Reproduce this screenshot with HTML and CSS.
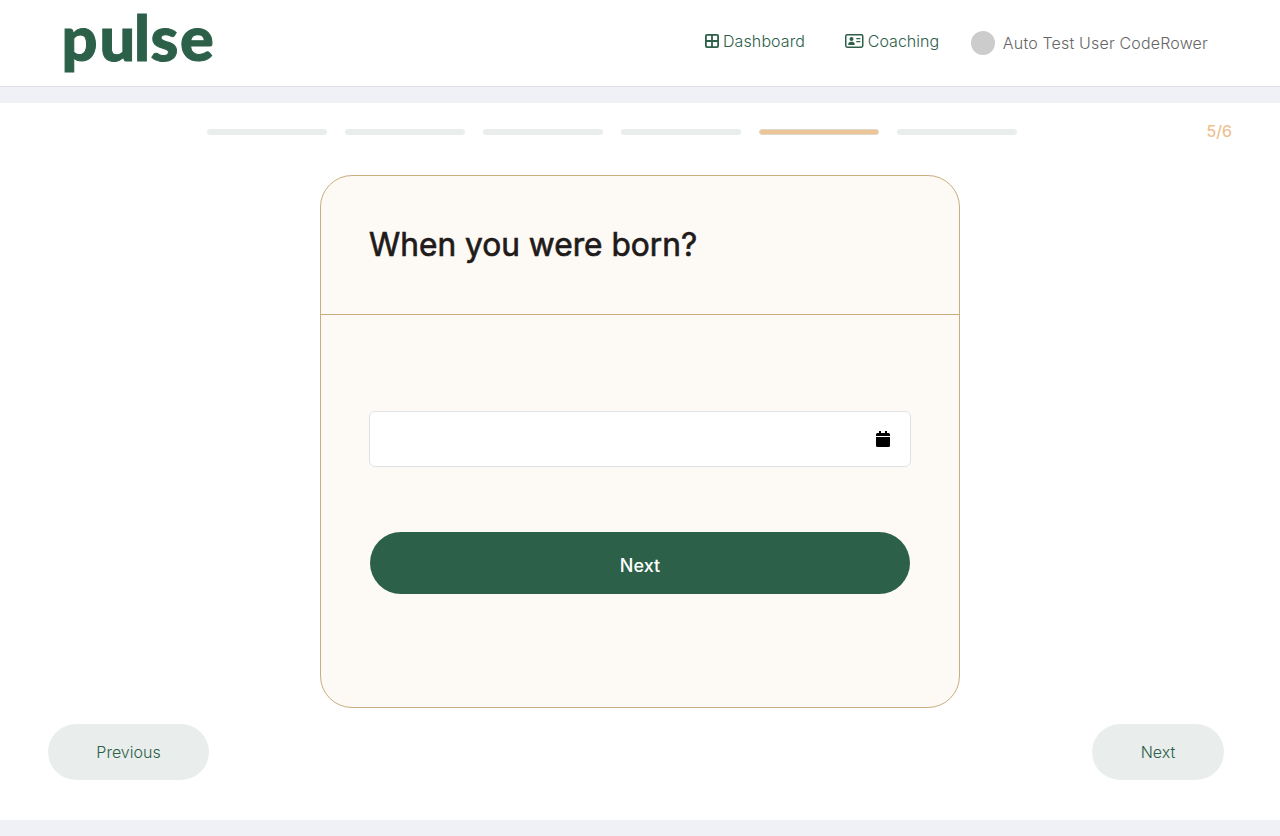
FILE: index.html
```html
<!DOCTYPE html>
<html lang="en">
<head>
<meta charset="utf-8">
<title>Pulse</title>
<link rel="stylesheet" href="styles.css">
</head>
<body>
<header class="header">
  <svg class="logo" width="160" height="80" viewBox="0 0 160 80" role="img" aria-label="pulse">
    <text class="logo-text" y="60.500" x="1.500 39.500 74 90.500 120">pulse</text>
  </svg>
  <nav class="nav">
    <a class="nav-link">
      <svg class="icon-grid" width="14" height="14" viewBox="0 0 14 14" fill="none" stroke="currentColor" stroke-width="1.8"><rect x=".9" y=".9" width="12.200" height="12.200" rx="1"/><path d="M7 1v12M1 7h12"/></svg>
      <span>Dashboard</span>
    </a>
    <a class="nav-link nav-coaching">
      <svg class="icon-card" width="19" height="14" viewBox="0 0 19 14" fill="currentColor"><rect x=".75" y=".75" width="17" height="12.5" rx="1.4" fill="none" stroke="currentColor" stroke-width="1.5"/><circle cx="6.5" cy="4.9" r="2"/><path d="M3.2 11c0-2 1.1-3.2 2.5-3.2h1.6c1.4 0 2.5 1.2 2.5 3.2zM11.3 4h4v1.300h-4zM11.3 7h4v1.300h-4z"/></svg>
      <span>Coaching</span>
    </a>
    <a class="user"><i class="avatar"></i><span>Auto Test User CodeRower</span></a>
  </nav>
</header>
<main class="main">
  <div class="progress">
    <div class="steps">
      <i class="step"></i><i class="step"></i><i class="step"></i><i class="step"></i><i class="step step-active"></i><i class="step"></i>
    </div>
    <span class="count">5/6</span>
  </div>
  <section class="card">
    <div class="card-head"><h1 class="title">When you were born?</h1></div>
    <div class="card-body">
      <div class="date-input">
        <svg width="14" height="16" viewBox="0 0 14 16"><path d="M3 0h2v2h4V0h2v2h1.5Q14 2 14 3.500V5H0V3.500Q0 2 1.500 2H3zM0 6h14v8.500Q14 16 12.500 16h-11Q0 16 0 14.500z"/></svg>
      </div>
      <button class="submit">Next</button>
    </div>
  </section>
  <div class="pager">
    <button class="pill pill-prev">Previous</button>
    <button class="pill pill-next">Next</button>
  </div>
</main>
</body>
</html>
```
FILE: styles.css
```css
* { box-sizing: border-box; }
body { margin: 0; background: #f0f1f6; font: 300 16px/24px Inter, sans-serif; }
button { font: inherit; border: 0; padding: 0; }
.header { height: 87px; display: flex; justify-content: space-between; padding: 0 72px 0 60px; background: #fff; border-bottom: 1px solid #dee2e6; }
.logo { display: block; overflow: visible; }
.logo-text { font: 900 63px Lato, sans-serif; fill: #2c6049; stroke: #2c6049; stroke-width: 1px; }
.nav { display: flex; align-items: flex-start; padding-top: 29px; color: #2c6049; }
.nav-link { display: flex; align-items: center; gap: 4px; width: 140.3px; letter-spacing: .1px; white-space: nowrap; }
.nav-coaching { width: 125.7px; gap: 3.5px; letter-spacing: 0; }
.user { display: flex; align-items: center; gap: 8px; margin-top: 2px; width: 237px; color: #666; letter-spacing: .17px; white-space: nowrap; }
.avatar { width: 24px; height: 24px; border-radius: 50%; background: #ccc; }
.main { height: 717px; margin-top: 16px; padding: 0 48px; background: #fff; }
.progress { height: 72px; display: flex; align-items: flex-start; justify-content: space-between; padding: 16px 0 0 159px; }
.steps { display: flex; gap: 18px; padding-top: 10px; }
.step { width: 120px; height: 6px; border-radius: 3px; background: #e9eeec; }
.step-active { background: #ecc498; border: 1px solid #dfd9c8; }
.count { color: #eebd8c; font-weight: 400; -webkit-text-stroke: .15px #eebd8c; }
.card { width: 640px; height: 533px; margin: 0 auto; background: #fdfaf5; border: 1px solid #c9ad80; border-radius: 32px; }
.card-head { height: 139px; padding: 47px 48px 0; border-bottom: 1px solid #c9ad80; }
.title { width: max-content; margin: 0; color: #1f1b1a; font-size: 33px; font-weight: 400; line-height: 43px; -webkit-text-stroke: .7px #1f1b1a; white-space: nowrap; transform: scaleX(.96); transform-origin: left; }
.card-body { padding: 96px 48px 0; }
.date-input { height: 56px; display: flex; align-items: center; justify-content: flex-end; padding-right: 20px; background: #fff; border: 1px solid #dee2e6; border-radius: 6px; }
.submit { display: block; width: 540px; height: 62px; margin: 65px auto 0; padding-top: 5px; border-radius: 31px; background: #2c6049; color: #fff; font-size: 18px; font-weight: 500; }
.pager { display: flex; justify-content: space-between; padding: 16px 8px 0 0; }
.pill { height: 56px; border-radius: 28px; background: #e9eeec; color: #2c6049; }
.pill-prev { width: 161px; }
.pill-next { width: 132px; }
```
